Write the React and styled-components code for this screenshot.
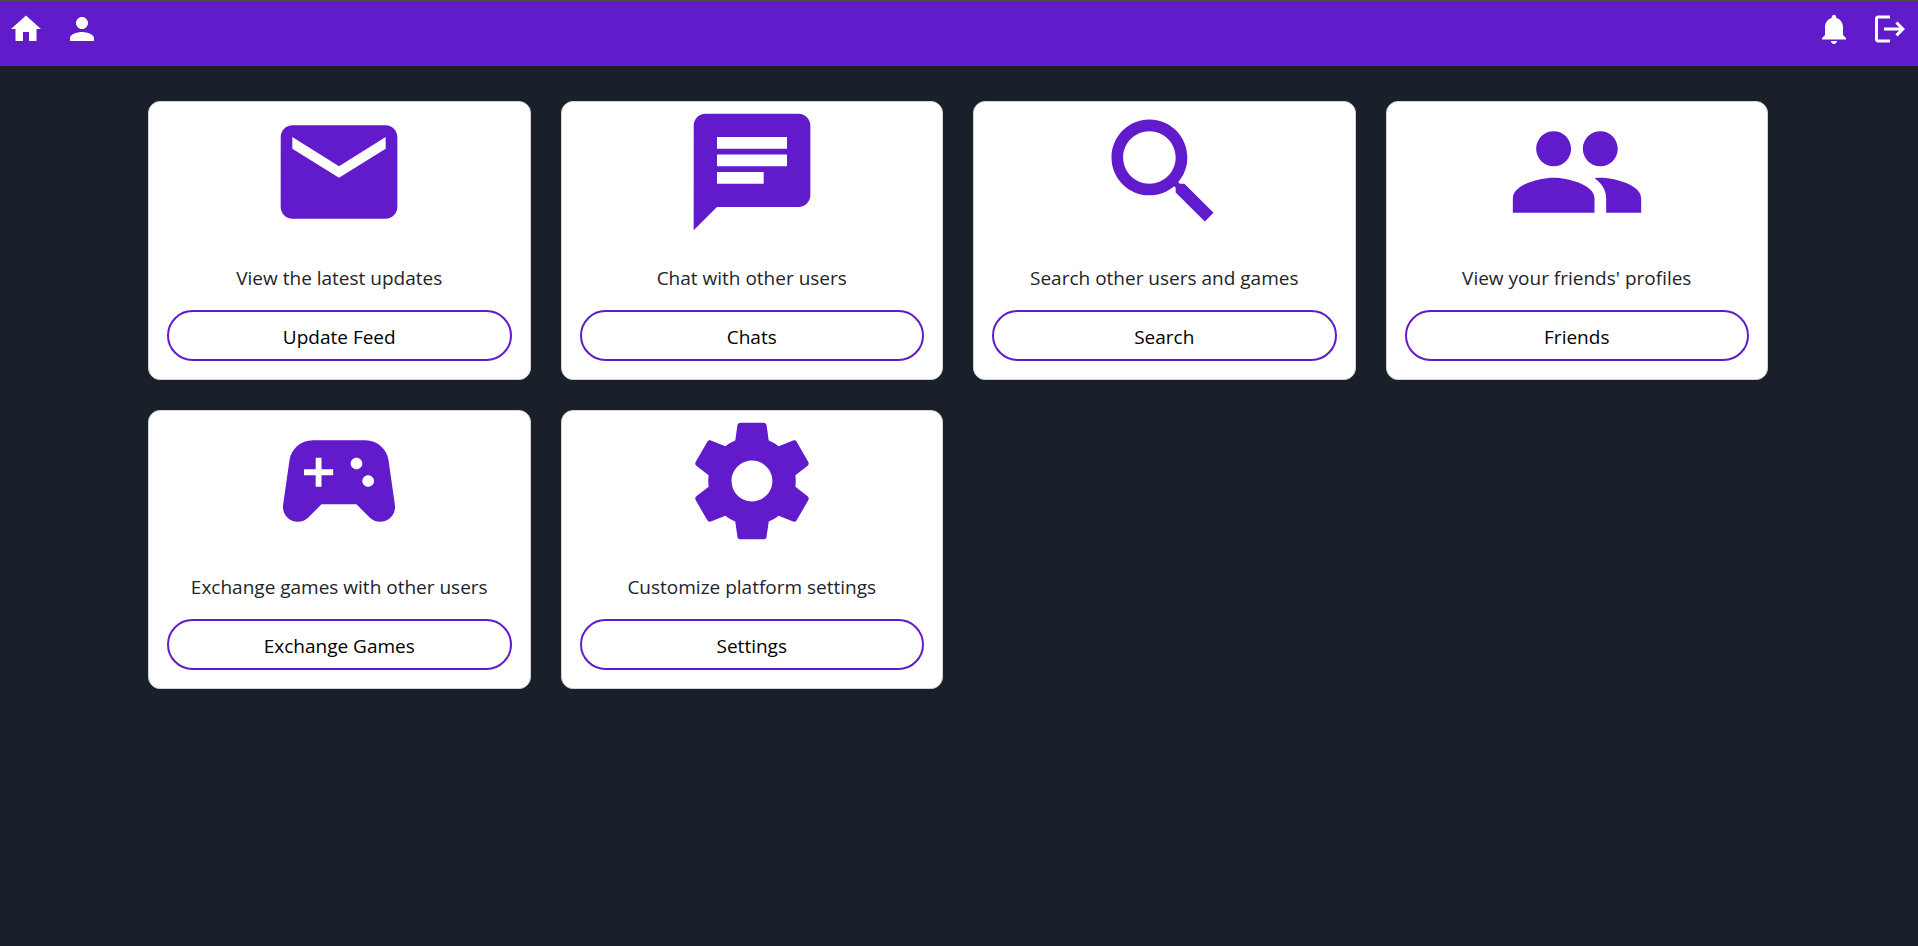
import React from "react";
import styled, { createGlobalStyle } from "styled-components";

const GlobalStyle = createGlobalStyle`
  *, *::before, *::after { box-sizing: border-box; }
  body {
    margin: 0;
    background: #1a2029;
    color: #212529;
    font-family: "Segoe UI", "Open Sans", "Noto Sans", sans-serif;
    font-size: 19px;
    line-height: 30px;
  }
`;

const paths = {
  home: "M10 20v-6h4v6h5v-8h3L12 3 2 12h3v8z",
  person:
    "M12 12c2.21 0 4-1.79 4-4s-1.79-4-4-4-4 1.79-4 4 1.79 4 4 4zm0 2c-2.67 0-8 1.34-8 4v2h16v-2c0-2.66-5.33-4-8-4z",
  bell: "M12 22c1.1 0 2-.9 2-2h-4c0 1.1.89 2 2 2zm6-6v-5c0-3.07-1.64-5.64-4.5-6.32V4c0-.83-.67-1.5-1.5-1.5s-1.5.67-1.5 1.5v.68C7.63 5.36 6 7.92 6 11v5l-2 2v1h16v-1l-2-2z",
  logout:
    "m17 7-1.41 1.41L18.17 11H8v2h10.17l-2.58 2.58L17 17l5-5zM4 5h8V3H4c-1.1 0-2 .9-2 2v14c0 1.1.9 2 2 2h8v-2H4V5z",
  mail: "M20 4H4c-1.1 0-1.99.9-1.99 2L2 18c0 1.1.9 2 2 2h16c1.1 0 2-.9 2-2V6c0-1.1-.9-2-2-2zm0 4-8 5-8-5V6l8 5 8-5v2z",
  chat: "M20 2H4c-1.1 0-1.99.9-1.99 2L2 22l4-4h14c1.1 0 2-.9 2-2V4c0-1.1-.9-2-2-2zM6 9h12v2H6V9zm8 5H6v-2h8v2zm4-6H6V6h12v2z",
  search:
    "M15.5 14h-.79l-.28-.27C15.41 12.59 16 11.11 16 9.5 16 5.91 13.09 3 9.5 3S3 5.91 3 9.5 5.91 16 9.5 16c1.61 0 3.09-.59 4.23-1.57l.27.28v.79l5 4.99L20.49 19l-4.99-5zm-6 0C7.01 14 5 11.99 5 9.5S7.01 5 9.5 5 14 7.01 14 9.5 11.99 14 9.5 14z",
  people:
    "M16 11c1.66 0 2.99-1.34 2.99-3S17.66 5 16 5c-1.66 0-3 1.34-3 3s1.34 3 3 3zm-8 0c1.66 0 2.99-1.34 2.99-3S9.66 5 8 5C6.34 5 5 6.34 5 8s1.34 3 3 3zm0 2c-2.33 0-7 1.17-7 3.5V19h14v-2.5c0-2.33-4.67-3.5-7-3.5zm8 0c-.29 0-.62.02-.97.05 1.16.84 1.97 1.97 1.97 3.45V19h6v-2.5c0-2.33-4.67-3.5-7-3.5z",
  gamepad:
    "M21.58 16.09l-1.09-7.66C20.21 6.46 18.52 5 16.53 5H7.47C5.48 5 3.79 6.46 3.51 8.43l-1.09 7.66C2.2 17.63 3.39 19 4.94 19c.68 0 1.32-.27 1.8-.75L9 16h6l2.25 2.25c.48.48 1.13.75 1.8.75 1.56 0 2.75-1.37 2.53-2.91zM11 11H9v2H8v-2H6v-1h2V8h1v2h2v1zm4-1c-.55 0-1-.45-1-1s.45-1 1-1 1 .45 1 1-.45 1-1 1zm2 3c-.55 0-1-.45-1-1s.45-1 1-1 1 .45 1 1-.45 1-1 1z",
  settings:
    "M19.43 12.98c.04-.32.07-.64.07-.98s-.03-.66-.07-.98l2.11-1.65c.19-.15.24-.42.12-.64l-2-3.46c-.12-.22-.39-.3-.61-.22l-2.49 1c-.52-.4-1.08-.73-1.69-.98l-.38-2.65C14.46 2.18 14.25 2 14 2h-4c-.25 0-.46.18-.49.42l-.38 2.65c-.61.25-1.17.59-1.69.98l-2.49-1c-.23-.09-.49 0-.61.22l-2 3.46c-.13.22-.07.49.12.64l2.11 1.65c-.04.32-.07.65-.07.98s.03.66.07.98l-2.11 1.65c-.19.15-.24.42-.12.64l2 3.46c.12.22.39.3.61.22l2.49-1c.52.4 1.08.73 1.69.98l.38 2.65c.03.24.24.42.49.42h4c.25 0 .46-.18.49-.42l.38-2.65c.61-.25 1.17-.59 1.69-.98l2.49 1c.23.09.49 0 .61-.22l2-3.46c.12-.22.07-.49-.12-.64l-2.11-1.65zM12 15.5c-1.93 0-3.5-1.57-3.5-3.5s1.57-3.5 3.5-3.5 3.5 1.57 3.5 3.5-1.57 3.5-3.5 3.5z",
};

const Svg = styled.svg`
  display: block;
  width: ${(p) => p.$size}px;
  height: ${(p) => p.$size}px;
  fill: currentColor;
`;

const Icon = ({ name, size }) => (
  <Svg viewBox="0 0 24 24" $size={size} aria-hidden="true">
    <path d={paths[name]} />
  </Svg>
);

const Header = styled.header`
  display: flex;
  justify-content: space-between;
  height: 66px;
  padding: 10px 10px 0 8px;
  border-top: 1px solid #4a4a4a;
  background: #611bcb;
`;

const Nav = styled.nav`
  display: flex;
  align-items: flex-start;
  gap: 20px;
`;

const NavLink = styled.a`
  color: #fff;
`;

const NavButton = styled.button`
  padding: 0;
  border: 0;
  background: none;
  color: #fff;
  cursor: pointer;
`;

const Grid = styled.main`
  display: grid;
  grid-template-columns: repeat(4, minmax(0, 1fr));
  gap: 30px;
  padding: 35px 150px 35px 148px;

  @media (max-width: 1300px) {
    grid-template-columns: repeat(2, minmax(0, 1fr));
    padding: 35px;
  }
`;

const Card = styled.article`
  display: flex;
  flex-direction: column;
  align-items: center;
  padding: 0 18px 18px;
  border: 1px solid #d3d4d5;
  border-radius: 12px;
  background: #fff;
  text-align: center;
`;

const CardIcon = styled.div`
  color: #611bcb;
`;

const CardText = styled.p`
  margin: 21px 0 17px;
`;

const CardButton = styled.button`
  width: 100%;
  height: 51px;
  padding: 2px 12px 0;
  border: 2px solid #611bcb;
  border-radius: 26px;
  background: #fff;
  color: #000;
  font: inherit;
  cursor: pointer;
`;

const cards = [
  { icon: "mail", text: "View the latest updates", action: "Update Feed" },
  { icon: "chat", text: "Chat with other users", action: "Chats" },
  { icon: "search", text: "Search other users and games", action: "Search" },
  { icon: "people", text: "View your friends' profiles", action: "Friends" },
  { icon: "gamepad", text: "Exchange games with other users", action: "Exchange Games" },
  { icon: "settings", text: "Customize platform settings", action: "Settings" },
];

export default function App() {
  return (
    <>
      <GlobalStyle />
      <Header>
        <Nav aria-label="Main">
          <NavLink href="#home" aria-label="Home">
            <Icon name="home" size={36} />
          </NavLink>
          <NavLink href="#profile" aria-label="Profile">
            <Icon name="person" size={36} />
          </NavLink>
        </Nav>
        <Nav aria-label="Account">
          <NavButton type="button" aria-label="Notifications">
            <Icon name="bell" size={36} />
          </NavButton>
          <NavButton type="button" aria-label="Log out">
            <Icon name="logout" size={36} />
          </NavButton>
        </Nav>
      </Header>
      <Grid>
        {cards.map((card) => (
          <Card key={card.action}>
            <CardIcon>
              <Icon name={card.icon} size={140} />
            </CardIcon>
            <CardText>{card.text}</CardText>
            <CardButton type="button">{card.action}</CardButton>
          </Card>
        ))}
      </Grid>
    </>
  );
}
